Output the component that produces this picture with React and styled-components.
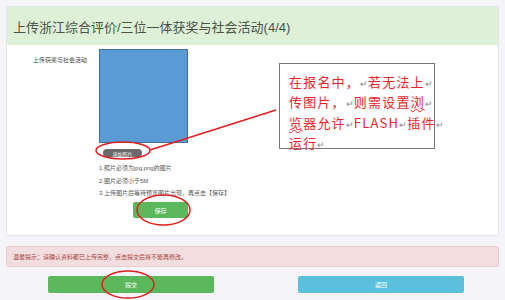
import React from "react";
import styled, {createGlobalStyle} from "styled-components";

const Global = createGlobalStyle`
  html, body {
    margin: 0;
    padding: 0;
    background: #f4f4f9;
    font-family: "Liberation Sans", "Noto Sans CJK SC", sans-serif;
  }
`

const Page = styled.div`
  position: relative;
  width: 505px;
  height: 300px;
  padding: 6px 6px 0 6px;
  box-sizing: border-box;
  overflow: hidden;
`
const Panel = styled.div`
  width: 493px;
  height: 230px;
  background: #fff;
  border: 1px solid #e4e8e4;
  box-sizing: border-box;
  display: flex;
  flex-direction: column;
`
const Heading = styled.div`
  height: 38px;
  background: #dff0d8;
  display: flex;
  align-items: center;
  padding-left: 6px;
  font-size: 13px;
  color: #4a534a;
  flex-shrink: 0;
`
const FormRow = styled.div`
  display: flex;
  gap: 12px;
  padding-top: 4px;
`
const Label = styled.div`
  width: 80px;
  text-align: right;
  font-size: 6px;
  color: #444;
  padding-top: 6px;
`
const Field = styled.div`
  display: flex;
  flex-direction: column;
  align-items: flex-start;
`
const Preview = styled.div`
  width: 89px;
  height: 94px;
  background: #5b9bd5;
  border: 1px solid #41719c;
  box-sizing: border-box;
`
const PillButton = styled.div`
  margin: 6px 0 0 4px;
  width: 39px;
  height: 8px;
  border-radius: 4px;
  background: #6a6a6a;
  color: #fff;
  font-size: 5px;
  display: flex;
  align-items: center;
  justify-content: center;
`
const Notes = styled.div`
  margin-top: 8px;
  display: flex;
  flex-direction: column;
  gap: 6.5px;
  font-size: 6px;
  color: #555;
  line-height: 6px;
`
const Btn = styled.div`
  width: ${p => p.$w}px;
  height: ${p => p.$h}px;
  margin-left: ${p => p.$ml || 0}px;
  margin-top: ${p => p.$mt || 0}px;
  background: ${p => p.$bg};
  border-radius: 2px;
  color: #fff;
  font-size: 6px;
  display: flex;
  align-items: center;
  justify-content: center;
`
const Alert = styled.div`
  margin-top: 10px;
  width: 493px;
  height: 21px;
  background: #f2dede;
  border: 1px solid #ebccd1;
  border-radius: 2px;
  box-sizing: border-box;
  color: #a94442;
  font-size: 6px;
  display: flex;
  align-items: center;
  padding-left: 6px;
`
const Actions = styled.div`
  display: flex;
  gap: 84px;
  padding-left: 42px;
  margin-top: 9px;
`
const Note = styled.div`
  position: absolute;
  left: 279px;
  top: 63px;
  width: 156px;
  height: 86px;
  background: #fff;
  border: 1px solid #777;
  box-sizing: border-box;
  padding: 9px 0 0 9px;
  font-family: "Noto Sans CJK SC", sans-serif;
  font-size: 13px;
  line-height: 18.3px;
  letter-spacing: 1.2px;
  color: #e8262a;
  white-space: nowrap;
`
const Ret = styled.span`
  color: #888;
  font-size: 9px;
  letter-spacing: 0;
`
const Wavy = styled.span`
  text-decoration: underline wavy #e8262a;
  text-decoration-thickness: 1px;
`
const Marks = styled.svg`
  position: absolute;
  left: 0;
  top: 0;
  pointer-events: none;
`

const R = () => <Ret>↵</Ret>

const App = () => {
    return (<Page>
        <Global/>
        <Panel>
            <Heading>上传浙江综合评价/三位一体获奖与社会活动(4/4)</Heading>
            <FormRow>
                <Label>上传获奖与社会活动</Label>
                <Field>
                    <Preview/>
                    <PillButton>添加照片</PillButton>
                    <Notes>
                        <div>1.照片必须为jpg,png的图片</div>
                        <div>2.图片必须小于5M</div>
                        <div>3.上传图片后等待预览图片出现，再点击【保存】</div>
                    </Notes>
                    <Btn $w={55} $h={16} $ml={34} $mt={6} $bg="#5cb85c">保存</Btn>
                </Field>
            </FormRow>
        </Panel>
        <Alert>温馨提示：请确认资料都已上传完整，点击提交后将不能再修改。</Alert>
        <Actions>
            <Btn $w={166} $h={17} $bg="#5cb85c">提交</Btn>
            <Btn $w={166} $h={17} $bg="#5bc0de">返回</Btn>
        </Actions>

        <Note>
            <div>在报名中，<R/>若无法上<R/></div>
            <div>传图片，<R/>则需设置<Wavy>浏</Wavy><R/></div>
            <div><Wavy>览</Wavy>器允许<R/>FLASH<R/>插件<R/></div>
            <div>运行<R/></div>
        </Note>

        <Marks width="505" height="300">
            <g fill="none" stroke="#e01e1e" strokeWidth="1.5">
                <line x1="150" y1="150" x2="276" y2="110"/>
                <ellipse cx="123" cy="150.5" rx="27" ry="8.5"/>
                <ellipse cx="163.5" cy="210" rx="26.5" ry="15"/>
                <ellipse cx="128" cy="284.5" rx="26" ry="13.5"/>
            </g>
        </Marks>
    </Page>)
}

export default App
